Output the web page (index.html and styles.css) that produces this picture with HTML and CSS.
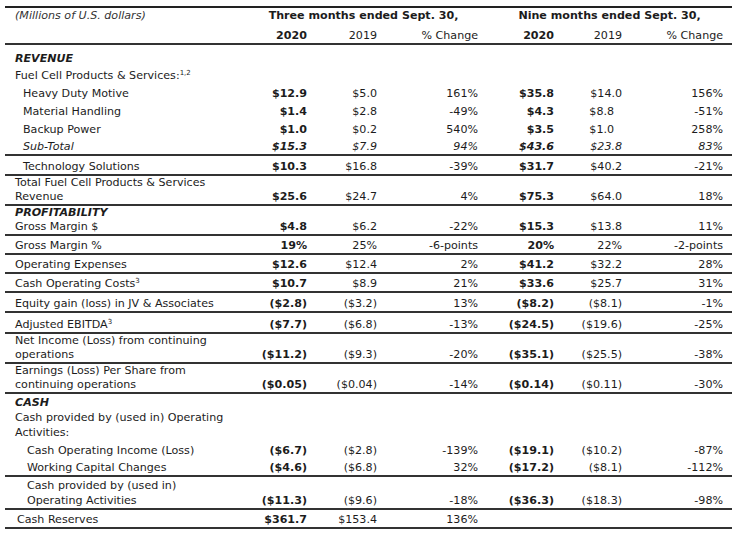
FILE: index.html
```html
<!DOCTYPE html>
<html lang="en">
<head>
<meta charset="utf-8">
<title>Financial summary</title>
<link rel="stylesheet" href="styles.css">
</head>
<body>
<table class="fin">
  <colgroup>
    <col class="c-label"><col class="c-cur"><col class="c-prev"><col class="c-pct"><col class="c-cur"><col class="c-prev2"><col class="c-pct">
  </colgroup>
  <thead>
    <tr class="p0">
      <th class="label unit">(Millions of U.S. dollars)</th>
      <th colspan="3" class="span">Three months ended Sept. 30,</th>
      <th colspan="3" class="span">Nine months ended Sept. 30,</th>
    </tr>
    <tr class="p5 rule">
      <th class="label"></th>
      <th class="b">2020</th><th>2019</th><th>% Change</th>
      <th class="b">2020</th><th>2019</th><th>% Change</th>
    </tr>
  </thead>
  <tbody>
    <tr class="p6"><td class="label section">REVENUE</td><td></td><td></td><td></td><td></td><td></td><td></td></tr>
    <tr class="p2"><td class="label">Fuel Cell Products &amp; Services:<sup>1,2</sup></td><td></td><td></td><td></td><td></td><td></td><td></td></tr>
    <tr class="p3"><td class="label i1">Heavy Duty Motive</td><td class="b">$12.9</td><td>$5.0</td><td>161%</td><td class="b">$35.8</td><td>$14.0</td><td>156%</td></tr>
    <tr class="p3"><td class="label i1">Material Handling</td><td class="b">$1.4</td><td>$2.8</td><td>-49%</td><td class="b">$4.3</td><td class="trail">$8.8</td><td>-51%</td></tr>
    <tr class="p3"><td class="label i1">Backup Power</td><td class="b">$1.0</td><td>$0.2</td><td>540%</td><td class="b">$3.5</td><td class="trail">$1.0</td><td>258%</td></tr>
    <tr class="p2 rule it"><td class="label i1">Sub-Total</td><td class="b">$15.3</td><td>$7.9</td><td>94%</td><td class="b">$43.6</td><td>$23.8</td><td>83%</td></tr>
    <tr class="p3 rule"><td class="label i1">Technology Solutions</td><td class="b">$10.3</td><td>$16.8</td><td>-39%</td><td class="b">$31.7</td><td>$40.2</td><td>-21%</td></tr>
    <tr class="p0 rule tight"><td class="label">Total Fuel Cell Products &amp; Services<br>Revenue</td><td class="b">$25.6</td><td>$24.7</td><td>4%</td><td class="b">$75.3</td><td>$64.0</td><td>18%</td></tr>
    <tr class="p0 tight"><td class="label section">PROFITABILITY</td><td></td><td></td><td></td><td></td><td></td><td></td></tr>
    <tr class="p0 rule tight"><td class="label">Gross Margin $</td><td class="b">$4.8</td><td>$6.2</td><td>-22%</td><td class="b">$15.3</td><td>$13.8</td><td>11%</td></tr>
    <tr class="p2 rule"><td class="label">Gross Margin %</td><td class="b">19%</td><td>25%</td><td>-6-points</td><td class="b">20%</td><td>22%</td><td>-2-points</td></tr>
    <tr class="p2 rule"><td class="label">Operating Expenses</td><td class="b">$12.6</td><td>$12.4</td><td>2%</td><td class="b">$41.2</td><td>$32.2</td><td>28%</td></tr>
    <tr class="p2 rule"><td class="label">Cash Operating Costs<sup>3</sup></td><td class="b">$10.7</td><td>$8.9</td><td>21%</td><td class="b">$33.6</td><td>$25.7</td><td>31%</td></tr>
    <tr class="p3 rule"><td class="label">Equity gain (loss) in JV &amp; Associates</td><td class="b">($2.8)</td><td>($3.2)</td><td>13%</td><td class="b">($8.2)</td><td>($8.1)</td><td>-1%</td></tr>
    <tr class="p4 rule"><td class="label">Adjusted EBITDA<sup>3</sup></td><td class="b">($7.7)</td><td>($6.8)</td><td>-13%</td><td class="b">($24.5)</td><td>($19.6)</td><td>-25%</td></tr>
    <tr class="p0 rule tight"><td class="label">Net Income (Loss) from continuing<br>operations</td><td class="b">($11.2)</td><td>($9.3)</td><td>-20%</td><td class="b">($35.1)</td><td>($25.5)</td><td>-38%</td></tr>
    <tr class="p0 rule tight"><td class="label">Earnings (Loss) Per Share from<br>continuing operations</td><td class="b">($0.05)</td><td>($0.04)</td><td>-14%</td><td class="b">($0.14)</td><td>($0.11)</td><td>-30%</td></tr>
    <tr class="p1"><td class="label section">CASH</td><td></td><td></td><td></td><td></td><td></td><td></td></tr>
    <tr class="p0"><td class="label">Cash provided by (used in) Operating<br>Activities:</td><td></td><td></td><td></td><td></td><td></td><td></td></tr>
    <tr class="p3"><td class="label i2">Cash Operating Income (Loss)</td><td class="b">($6.7)</td><td>($2.8)</td><td>-139%</td><td class="b">($19.1)</td><td>($10.2)</td><td>-87%</td></tr>
    <tr class="p2 rule"><td class="label i2">Working Capital Changes</td><td class="b">($4.6)</td><td>($6.8)</td><td>32%</td><td class="b">($17.2)</td><td>($8.1)</td><td>-112%</td></tr>
    <tr class="p1 rule"><td class="label i2">Cash provided by (used in)<br>Operating Activities</td><td class="b">($11.3)</td><td>($9.6)</td><td>-18%</td><td class="b">($36.3)</td><td>($18.3)</td><td>-98%</td></tr>
    <tr class="p2 rule"><td class="label i0">Cash Reserves</td><td class="b">$361.7</td><td>$153.4</td><td>136%</td><td></td><td></td><td></td></tr>
  </tbody>
</table>
</body>
</html>
```

FILE: styles.css
```css
html, body {
  margin: 0;
  padding: 0;
  background: #ffffff;
}

body {
  color: #1c1c1c;
  font-family: "DejaVu Sans", Verdana, sans-serif;
  font-size: 11.1px;
}

.fin {
  margin: 6px 0 0 5px;
  width: 727px;
  table-layout: fixed;
  border-collapse: separate;
  border-spacing: 0;
  border-top: 2px solid #222222;
}

.c-label { width: 235px; }
.c-cur { width: 76px; }
.c-prev { width: 70px; }
.c-prev2 { width: 68px; }
.c-pct { width: 101px; }

.fin th,
.fin td {
  padding: 0 9px 0 0;
  line-height: 15px;
  text-align: right;
  vertical-align: bottom;
  font-weight: normal;
  white-space: nowrap;
}

.fin .label {
  text-align: left;
  padding-left: 10px;
  padding-right: 0;
}

.fin .i0 { padding-left: 12px; }
.fin .i1 { padding-left: 18px; }
.fin .i2 { padding-left: 22px; }

.fin .unit {
  font-style: italic;
  color: #333333;
}

.fin .span {
  text-align: center;
  padding-right: 0;
  font-weight: bold;
}

.fin .b { font-weight: bold; }

.fin .section {
  font-weight: bold;
  font-style: italic;
}

.fin .trail { padding-right: 17px; }

.fin .it > * { font-style: italic; }

.fin .tight > * { line-height: 14px; }

.fin .p0 > * { padding-top: 0; }
.fin .p1 > * { padding-top: 1px; }
.fin .p2 > * { padding-top: 2px; }
.fin .p3 > * { padding-top: 3px; }
.fin .p4 > * { padding-top: 4px; }
.fin .p5 > * { padding-top: 5px; }
.fin .p6 > * { padding-top: 6px; }

.fin .rule > * { border-bottom: 2px solid #333333; }

sup {
  font-size: 7px;
  line-height: 0;
  vertical-align: 4px;
}
```
